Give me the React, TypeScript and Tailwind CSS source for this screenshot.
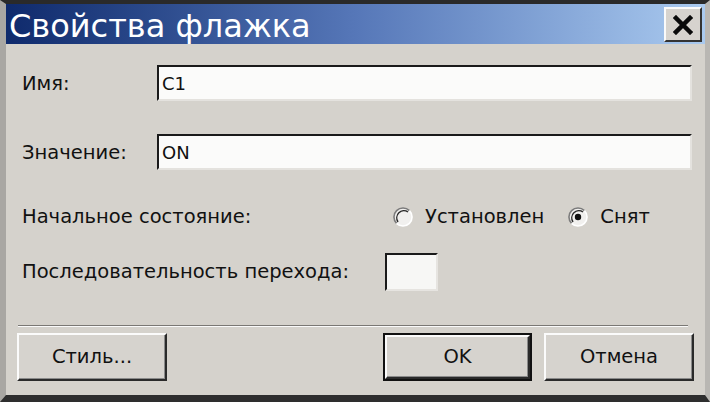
import React from 'react';

const font = { fontFamily: '"DejaVu Sans", Verdana, sans-serif' };

const Radio = ({ checked, label }: { checked?: boolean; label: string }) => (
  <div className="flex items-center">
    <svg width="20" height="20" viewBox="0 0 20 20" className="shrink-0">
      <circle cx="10" cy="10" r="9" fill="#f1f0ee" />
      <path d="M16.4 3.6 A9 9 0 0 0 3.6 16.4" fill="none" stroke="#7c7c7c" strokeWidth="1.6" />
      <path d="M15 5 A7.2 7.2 0 0 0 5 15" fill="none" stroke="#2a2a2a" strokeWidth="1.4" />
      <path d="M3.6 16.4 A9 9 0 0 0 16.4 3.6" fill="none" stroke="#ffffff" strokeWidth="1.6" />
      {checked && <circle cx="10" cy="10" r="3.2" fill="#111" />}
    </svg>
    <span className="ml-[12px] text-[19.5px] text-[#111]">{label}</span>
  </div>
);

const Field = ({ label, value }: { label: string; value: string }) => (
  <div className="flex items-center h-[36px]">
    <span className="w-[135px] text-[19.5px] text-[#111] pt-[2px]">{label}</span>
    <div className="flex-1 h-full bg-[#fbfbfa] border-t-2 border-l-2 border-t-[#1a1a1a] border-l-[#1a1a1a] border-b-2 border-r-2 border-b-[#e4e2de] border-r-[#e4e2de] flex items-center pl-[3px] text-[18px] text-[#111]">
      {value}
    </div>
  </div>
);

const Button = ({ label, isDefault, w }: { label: string; isDefault?: boolean; w: string }) => (
  <div className={`${w} h-[48px] ${isDefault ? 'border-2 border-[#111]' : ''} shrink-0`}>
    <div className="w-full h-full bg-[#d6d3ce] border-t-2 border-l-2 border-t-[#fbfbfb] border-l-[#fbfbfb] border-b-2 border-r-2 border-b-[#2a2a2a] border-r-[#2a2a2a] shadow-[inset_-1px_-1px_0_#8a8a8a] flex items-center justify-center text-[19.5px] text-[#111]">
      {label}
    </div>
  </div>
);

export default function App() {
  return (
    <div
      className="w-[710px] h-[402px] bg-[#d5d2cc] flex flex-col border-t-[4px] border-t-[#2a2a2a] border-l-[6px] border-l-[#a9a7a3] border-r-[5px] border-r-[#b9b7b3] border-b-[7px] border-b-[#2e2e2e] overflow-hidden"
      style={font}
    >
      {/* Title bar */}
      <div className="h-[40px] shrink-0 flex items-start justify-between bg-linear-to-r from-[#0f2a6c] via-[#5677b8] to-[#aacaef] pl-[3px] pr-[3px]">
        <span className="text-[32px] leading-[40px] pt-[2px] text-white">Свойства флажка</span>
        <div className="mt-[3px] w-[38px] h-[35px] bg-[#d6d3ce] border-t-2 border-l-2 border-t-[#fafafa] border-l-[#fafafa] border-b-2 border-r-2 border-b-[#333] border-r-[#333] flex items-center justify-center">
          <svg width="20" height="20" viewBox="0 0 20 20">
            <path d="M3 3 L17 17 M17 3 L3 17" stroke="#0a0a0a" strokeWidth="4.5" strokeLinecap="square" />
          </svg>
        </div>
      </div>

      {/* Body */}
      <div className="flex-1 flex flex-col">
        <div className="pl-[16px] pr-[13px] flex flex-col">
          <div className="mt-[21px]">
            <Field label="Имя:" value="C1" />
          </div>
          <div className="mt-[33px]">
            <Field label="Значение:" value="ON" />
          </div>

          <div className="mt-[32px] h-[30px] flex items-center">
            <span className="w-[371px] text-[19.5px] text-[#111]">Начальное состояние:</span>
            <div className="flex items-center gap-[24px]">
              <Radio label="Установлен" />
              <Radio checked label="Снят" />
            </div>
          </div>

          <div className="mt-[21px] h-[38px] flex items-center">
            <span className="w-[363px] text-[19.5px] text-[#111]">Последовательность перехода:</span>
            <div className="w-[53px] h-[38px] bg-[#f7f7f5] border-t-2 border-l-2 border-t-[#1a1a1a] border-l-[#1a1a1a] border-b-2 border-r-2 border-b-[#e6e4e0] border-r-[#e6e4e0]" />
          </div>
        </div>

        {/* Separator */}
        <div className="mt-[34px] ml-[12px] mr-[17px] border-t border-t-[#7a7874] border-b border-b-[#fafafa]" />

        {/* Buttons */}
        <div className="mt-[6px] pl-[11px] pr-[11px] flex items-center">
          <Button label="Стиль..." w="w-[150px]" />
          <div className="flex-1" />
          <Button label="OK" isDefault w="w-[149px]" />
          <div className="w-[12px]" />
          <Button label="Отмена" w="w-[150px]" />
        </div>
      </div>
    </div>
  );
}
